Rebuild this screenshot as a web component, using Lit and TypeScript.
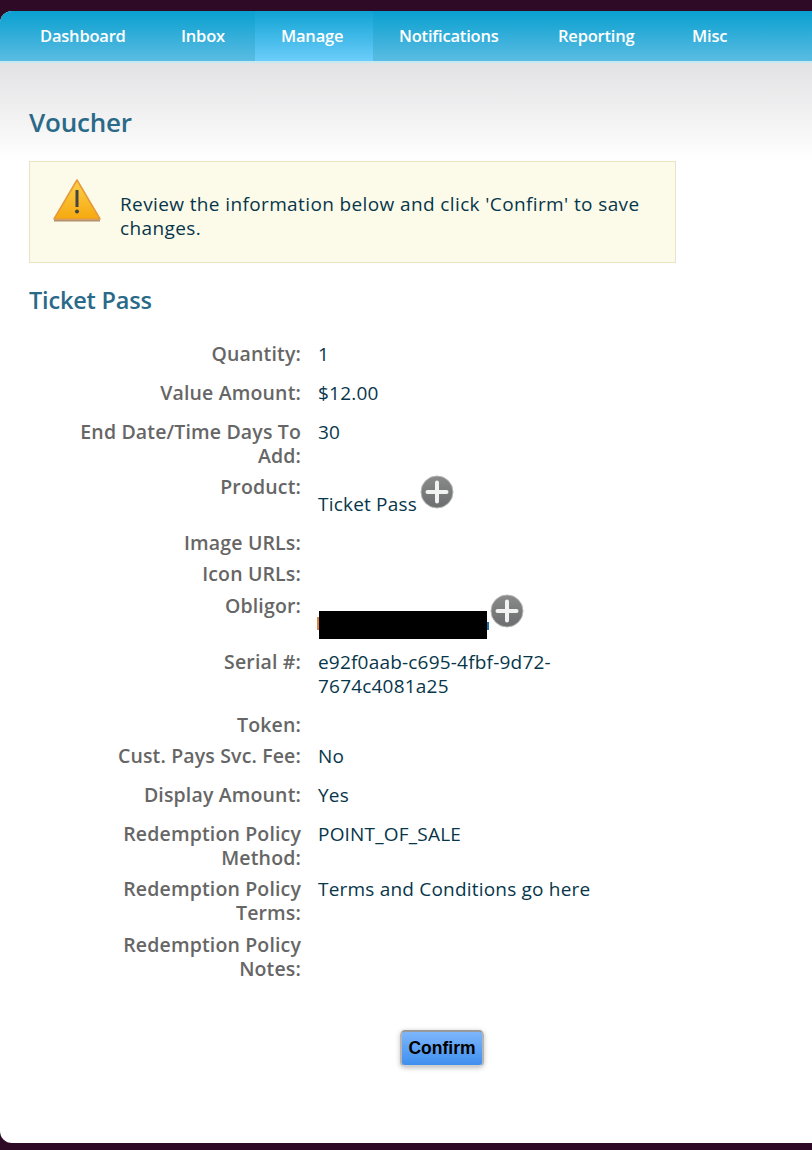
import { LitElement, html, css } from "lit";
import { customElement } from "lit/decorators.js";

const plus = html`<svg class="plus" width="34" height="34" viewBox="0 0 34 34" aria-hidden="true">
  <defs><linearGradient id="pg" x1="0" y1="0" x2="0" y2="1"><stop offset="0" stop-color="#8a8a8a"/><stop offset="1" stop-color="#6a6e6e"/></linearGradient></defs>
  <circle cx="17" cy="17" r="16" fill="url(#pg)" stroke="#b5b5b5" stroke-width="1"/>
  <path d="M17 7.5v19M7.5 17h19" stroke="#f2f2f2" stroke-width="4" stroke-linecap="round"/>
</svg>`;

type Row = { l: string; v?: unknown };

@customElement("app-root")
export class AppRoot extends LitElement {
  static styles = css`
    :host { display: block; width: 812px; height: 1150px; background: #2e0a27; padding-top: 11px; box-sizing: border-box; overflow: hidden; font-family: "Open Sans", "Noto Sans", sans-serif; }
    .window { height: 1132px; background: #fff; border-radius: 12px 0 0 12px; overflow: hidden; }
    nav { height: 50px; display: flex; padding-left: 11px; background: linear-gradient(#09a0d0, #5bbce2); border-bottom: 2px solid #c4e9f3; }
    nav a { height: 50px; display: flex; align-items: center; padding-left: 29px; color: #fff; font-size: 16.5px; font-weight: 600; letter-spacing: -0.2px; box-sizing: border-box; flex: none; padding-bottom: 1px; }
    nav a:nth-child(1) { width: 141px; }
    nav a:nth-child(2) { width: 103px; }
    nav a:nth-child(3) { width: 118px; padding-left: 26px; background: linear-gradient(#0fa3d3, #6dcdfb); }
    nav a:nth-child(4) { width: 156px; padding-left: 26px; }
    nav a:nth-child(5) { width: 134px; }
    .head { height: 98px; padding: 43px 0 0 29px; box-sizing: border-box; background: linear-gradient(#e2e2e4, #fff); }
    h1 { margin: 0; font-size: 26px; line-height: 32px; font-weight: 600; color: #2a6a88; letter-spacing: -0.2px; }
    .notice { width: 647px; height: 102px; box-sizing: border-box; margin-left: 29px; background: #fcfbea; border: 1px solid #e8e5c5; display: flex; padding: 16px 0 0 23px; gap: 17px; }
    .notice svg { flex: none; }
    .notice p { margin: 14px 20px 0 0; font-size: 19px; line-height: 24px; color: #07364a; letter-spacing: 0.38px; }
    h2 { margin: 21px 0 0 29px; font-size: 23.5px; line-height: 32px; font-weight: 600; color: #2a6a88; letter-spacing: -0.2px; }
    .rows { margin: 25.5px 0 0 29px; width: 580px; }
    .row { display: flex; line-height: 24px; }
    .label { width: 272px; flex: none; box-sizing: border-box; padding: 0 0 7.4px 40px; text-align: right; font-size: 19.5px; font-weight: 600; color: #666; letter-spacing: 0.15px; }
    .value { margin-left: 17px; width: 285px; font-size: 19px; color: #07364a; padding-bottom: 15px; letter-spacing: 0.2px; }
    .icon-value { display: flex; align-items: flex-end; height: 41px; }
    .icon-value span { margin-right: 2px; }
    .plus { flex: none; margin-bottom: 7px; margin-left: 1px; }
    .redact { position: relative; width: 168px; height: 28px; background: #000; margin: 0 2px -4px 1px; }
    .redact::before, .redact::after { content: ""; position: absolute; width: 2px; }
    .redact::before { left: -2px; top: 6px; height: 13px; background: #d9844a; }
    .redact::after { right: -2px; top: 11px; height: 8px; background: #1f6f9f; }
    .actions { margin: 41.5px 0 0 400px; }
    button { width: 84px; height: 37px; box-sizing: border-box; font: bold 17.5px "Liberation Sans", Arial, sans-serif; color: #000; background: linear-gradient(#7db6fb, #3f8fef); border: 2px solid #b5b5b5; border-top-color: #999; border-bottom-color: #d0d0d0; border-radius: 5px; box-shadow: 0 1px 5px rgba(0,0,0,.25); padding: 0; }
  `;

  render() {
    const rows: Row[] = [
      { l: "Quantity:", v: "1" },
      { l: "Value Amount:", v: "$12.00" },
      { l: "End Date/Time Days To Add:", v: "30" },
      { l: "Product:", v: html`<div class="icon-value"><span>Ticket Pass</span>${plus}</div>` },
      { l: "Image URLs:" },
      { l: "Icon URLs:" },
      { l: "Obligor:", v: html`<div class="icon-value"><div class="redact"></div>${plus}</div>` },
      { l: "Serial #:", v: "e92f0aab-c695-4fbf-9d72-7674c4081a25" },
      { l: "Token:" },
      { l: "Cust. Pays Svc. Fee:", v: "No" },
      { l: "Display Amount:", v: "Yes" },
      { l: "Redemption Policy Method:", v: "POINT_OF_SALE" },
      { l: "Redemption Policy Terms:", v: "Terms and Conditions go here" },
      { l: "Redemption Policy Notes:" },
    ];
    return html`<div class="window">
      <nav>${["Dashboard", "Inbox", "Manage", "Notifications", "Reporting", "Misc"].map((n) => html`<a>${n}</a>`)}</nav>
      <div class="head"><h1>Voucher</h1></div>
      <div class="notice">
        <svg width="50" height="46" viewBox="0 0 50 46" aria-hidden="true">
          <defs><linearGradient id="wg" x1="0" y1="0" x2="0" y2="1"><stop offset="0" stop-color="#fcd04a"/><stop offset="1" stop-color="#f6a90f"/></linearGradient></defs>
          <path d="M24 2 47 41H1Z" fill="url(#wg)" stroke="#e79a3a" stroke-width="1.6" stroke-linejoin="round"/>
          <path d="M1 42.5h46" stroke="#b5916a" stroke-width="2"/>
          <path d="M24 12v17" stroke="#444" stroke-width="3"/><circle cx="24" cy="33.5" r="2" fill="#444"/>
        </svg>
        <p>Review the information below and click 'Confirm' to save changes.</p>
      </div>
      <h2>Ticket Pass</h2>
      <div class="rows">
        ${rows.map((r) => html`<div class="row"><div class="label">${r.l}</div>${r.v ? html`<div class="value">${r.v}</div>` : ""}</div>`)}
      </div>
      <div class="actions"><button>Confirm</button></div>
    </div>`;
  }
}
